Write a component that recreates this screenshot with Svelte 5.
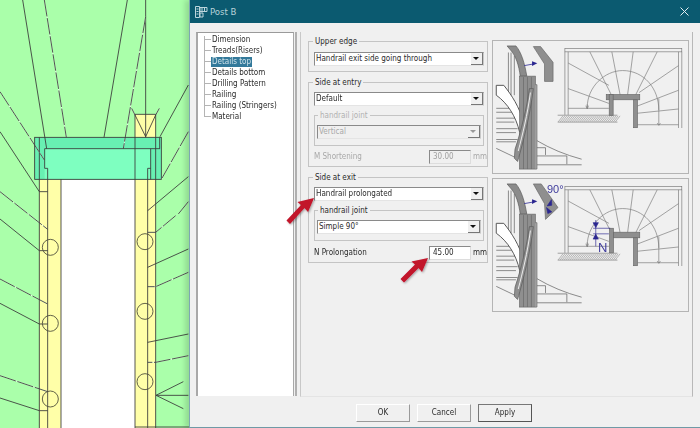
<script>
  const treeItems = ['Dimension','Treads(Risers)','Details top','Details bottom','Drilling Pattern','Railing','Railing (Stringers)','Material'];
  const solid = [
    [[68,0],[140,446]],[[382,0],[312,412]],[[437,0],[437,412]],[[565,255],[480,410]],[[0,395],[118,575],[143,575]],[[565,530],[443,632]],
    [[405,345],[437,410],[467,345]],
    [[0,657],[118,752],[143,752]],[[0,910],[118,972],[143,972]],[[0,1194],[118,1232],[143,1232]],
    [[565,747],[443,802]],[[565,1002],[443,1027]],[[468,1186],[550,1145]],[[468,1186],[565,1186]],[[468,1186],[550,1226]]
  ];
  const dashed = [
    [[133,0],[199,412]],[[437,50],[370,446]],[[0,275],[133,480]],[[565,395],[484,538]],[[0,575],[143,688]],[[565,605],[535,642]],
    [[395,325],[405,345]],[[478,325],[467,345]],
    [[0,837],[143,912]],[[0,1127],[143,1175]],[[527,647],[467,697],[443,697]],[[565,817],[467,860],[443,860]],[[565,1067],[467,1087],[443,1087]]
  ];
  const circles = [[151,742],[151,970],[151,1197],[435,725],[435,934],[435,1145]];
  const pts = (p) => p.map((q) => q.join(',')).join(' ');
  const fan = [
    [[234,82],[358,150]],[[300,48],[365,178]],[[367,48],[392,178]],[[432,48],[415,178]],[[505,48],[440,178]],[[570,90],[450,172]],
    [[570,165],[445,213]],[[570,222],[445,235]],[[234,160],[358,205]],[[234,220],[358,220]],[[510,190],[510,270]],[[445,270],[570,270]]
  ];
  const hatch = Array.from({length: 30}, (_, i) => 204 + i * 6);
</script>

<div class="stage">
  <svg class="cad" viewBox="0 0 567 1284" aria-hidden="true">
    <rect width="567" height="1284" fill="#aaffaa"/>
    <rect x="118" y="537" width="65" height="747" fill="#ffffa8"/>
    <rect x="405" y="343" width="62" height="941" fill="#ffffa8"/>
    <rect x="183" y="538" width="222" height="746" fill="#fff"/>
    <rect x="104" y="412" width="380" height="126" fill="#68f0b2"/>
    <rect x="134" y="446" width="318" height="92" fill="#7effc0"/>
    <g fill="none" stroke="#3a3a3a" stroke-width="2.6">
      {#each solid as l}<polyline points={pts(l)}/>{/each}
      {#each dashed as l}
        <polyline points={pts(l)} stroke="#e8ffe8"/>
        <polyline points={pts(l)} stroke-dasharray="50 5"/>
      {/each}
      <rect x="104" y="412" width="380" height="126"/>
      <polyline points="118,412 118,1284"/><polyline points="143,505 143,1284"/><polyline points="183,538 183,1284"/>
      <polyline points="405,343 405,1284"/><polyline points="467,343 467,1284"/><polyline points="405,343 467,343"/>
      <polyline points="443,505 443,1284"/><polyline points="452,446 452,538"/>
      <polyline points="134,480 134,446 480,446"/><polyline points="134,480 134,505 143,505"/><polyline points="452,505 443,505"/>
      <polyline points="479,412 479,446"/><polyline points="405,1281 567,1281"/>
      {#each circles as c}<circle cx={c[0]} cy={c[1]} r="24" stroke="#4a4a3a"/>{/each}
    </g>
  </svg>

  <section class="dialog">
    <header class="title">
      <svg class="logo" viewBox="0 0 14 14" aria-hidden="true"><path d="M1.500 1.500h4v11h-4zM2.500 4h2M2.500 6.500h2M2.500 9h2M6 2.500h7v4H6zM8 3v3M10.500 3v3M6 8h3v4H6z" fill="none" stroke="#bcd5dc"/></svg>
      <span>Post B</span>
      <svg class="close" viewBox="0 0 9 9" aria-hidden="true"><path d="M.5.5l8 8M8.500.5l-8 8" stroke="#e4eef1"/></svg>
    </header>

    <div class="main">
      <nav class="tree">
        <ul>
          {#each treeItems as item}
            <li class:selected={item === 'Details top'}><span>{item}</span></li>
          {/each}
        </ul>
      </nav>
      <div class="splitter"></div>

      <div class="panel">
        <div class="col">
          <div class="group g1">
            <span class="legend">Upper edge</span>
            <div class="select"><span>Handrail exit side going through</span><i></i></div>
          </div>

          <div class="group g2">
            <span class="legend">Side at entry</span>
            <div class="select"><span>Default</span><i></i></div>
            <div class="group inner">
              <span class="legend off">handrail joint</span>
              <div class="select disabled"><span>Vertical</span><i></i></div>
            </div>
            <div class="field off">
              <span>M Shortening</span>
              <div class="num disabled">30.00</div>
              <span class="unit">mm</span>
            </div>
          </div>

          <div class="group g2">
            <span class="legend">Side at exit</span>
            <div class="select"><span>Handrail prolongated</span><i></i></div>
            <div class="group inner">
              <span class="legend">handrail joint</span>
              <div class="select"><span>Simple 90°</span><i></i></div>
            </div>
            <div class="field last">
              <span>N Prolongation</span>
              <div class="num">45.00</div>
              <span class="unit">mm</span>
            </div>
          </div>
        </div>

        <div class="previews">
          {#each [false, true] as dims}
            <div class="preview">
              <svg viewBox="8 15 588 402" aria-hidden="true">
                <!-- elevation -->
                <g stroke="#555" stroke-width="2" fill="none">
                  <path d="M52 50V180M70 60V180M60 50V180"/>
                  <path d="M15 220H80M15 232H70M15 250H75M15 262H70M15 282H80M15 294H75M15 315H80M15 322H75M15 342L78 372"/>
                  <path d="M138 318Q200 355 275 375M138 340H165V362M138 365H230V390M138 392H275" />
                </g>
                <path d="M48 30H75C92 50 102 85 108 122H88C84 90 75 60 58 42Z" fill="#8b8b8b" stroke="#555" stroke-width="2"/>
                <path d="M15 150H38C62 180 85 215 98 262L86 292C75 245 50 205 15 180Z" fill="#fff" stroke="#555" stroke-width="3"/>
                <rect x="86" y="122" width="48" height="283" fill="#8f8f8f" stroke="#666" stroke-width="2"/>
                <path d="M134 148H139V405H134" fill="#aaa" stroke="#666" stroke-width="2"/>
                <path d="M98 125V405M110 125V405M122 125V405" stroke="#666" stroke-width="2"/>
                <path d="M116 160H128C118 240 98 320 80 382L70 372L72 345C90 290 108 220 116 160Z" fill="#8f8f8f" stroke="#555" stroke-width="2"/>
                <path d="M119 172C110 240 95 300 82 350" stroke="#eee" stroke-width="3" fill="none"/>
                {#if dims}
                  <path d="M128 30L152 30L203 102L165 138L162 90Z" fill="#8f8f8f" stroke="#666" stroke-width="2"/>
                {:else}
                  <path d="M128 32L150 32L188 80V138H162V85Z" fill="#8f8f8f" stroke="#666" stroke-width="2"/>
                {/if}
                <path d="M100 90L128 85" stroke="#34319a" stroke-width="2.5"/>
                <path d="M140 83L124 77V91Z" fill="#2a2690"/>

                <!-- plan -->
                <g stroke="#777" stroke-width="2" fill="none">
                  <rect x="224" y="38" width="356" height="10"/>
                  <path d="M224 48V240M234 48V240M570 48V280M580 48V280"/>
                  {#each fan as l}<polyline points={pts(l)}/>{/each}
                  <path d="M292 218C292 155 345 105 400 105C465 105 510 160 510 225"/>
                  <path d="M292 208V220M288 212L292 222L296 212"/>
                  <path d="M505 265L510 272L515 265"/>
                </g>
                {#if dims}
                  <rect x="372" y="177" width="80" height="17" fill="#8f8f8f" stroke="#666" stroke-width="2"/>
                  <rect x="360" y="165" width="12" height="75" fill="#8f8f8f" stroke="#666" stroke-width="2"/>
                {:else}
                  <rect x="350" y="178" width="102" height="16" fill="#8f8f8f" stroke="#666" stroke-width="2"/>
                  <rect x="359" y="178" width="12" height="64" fill="#8f8f8f" stroke="#666" stroke-width="2"/>
                {/if}
                <rect x="433" y="194" width="12" height="85" fill="#8f8f8f" stroke="#666" stroke-width="2"/>
                <g stroke="#777" stroke-width="1.5">
                  <path d="M202 241H384M202 262H384" stroke-width="2"/>
                  {#each hatch as x}<path d="M{x} 261L{x + 14} 243"/>{/each}
                </g>
                {#if dims}
                  <g fill="#2a2690" stroke="#2a2690" stroke-width="2">
                    <path d="M310 165H362M310 182H358M318 140V220" fill="none"/>
                    <path d="M310 148H326L318 163Z"/><path d="M310 198H326L318 183Z"/>
                    <path d="M183 78L170 97L184 95Z"/><path d="M172 120L168 102L184 115Z"/>
                  </g>
                {/if}
              </svg>
              {#if dims}
                <span class="dim deg">90°</span>
                <span class="dim n">N</span>
              {/if}
            </div>
          {/each}
        </div>
      </div>
    </div>

    <footer class="footer">
      <button>OK</button>
      <button>Cancel</button>
      <button class="default">Apply</button>
    </footer>
  </section>

  <svg class="arrows" viewBox="0 0 700 428" aria-hidden="true">
    <defs>
      <filter id="sh" x="-30%" y="-30%" width="160%" height="160%"><feDropShadow dx="1" dy="1" stdDeviation="1" flood-color="#000" flood-opacity=".35"/></filter>
    </defs>
    <g fill="#c2132a" filter="url(#sh)">
      <path d="M314 198L308 212L304.500 208L290 224L286.500 220.500L301 205L297.500 202Z"/>
      <path d="M428 258L422 272L418.500 268L404 282.500L400.500 279L415 264.500L411.500 261.500Z"/>
    </g>
  </svg>
</div>

<style>
  :global(body) { margin: 0; }
  .stage {
    position: relative;
    display: flex;
    width: 700px;
    height: 428px;
    overflow: hidden;
    font: 8px/10px "DejaVu Sans Condensed", "DejaVu Sans", sans-serif;
    font-stretch: condensed;
    color: #2a2a2a;
    filter: blur(0.4px);
  }
  .cad { width: 189px; height: 428px; flex: none; display: block; }
  .dialog {
    flex: 1;
    display: flex;
    flex-direction: column;
    background: #f0f0f0;
    border-bottom: 1px solid #6f9aa6;
    border-left: 1px solid #7ea7b2;
    box-shadow: -4px 0 5px rgba(0, 0, 0, .14);
    box-sizing: border-box;
    min-width: 0;
  }
  .title {
    height: 23px;
    flex: none;
    display: flex;
    align-items: center;
    gap: 2px;
    padding: 0 10px 0 4px;
    background: #0b5a70;
    color: #b8d2d9;
    font-size: 9.5px;
  }
  .logo { width: 14px; height: 14px; }
  .close { width: 9px; height: 9px; margin-left: auto; margin-right: 1px; }
  .main { flex: 1; display: flex; padding: 9px 7px 0 6px; min-height: 0; }
  .tree {
    width: 98px;
    height: 364px;
    box-sizing: border-box;
    background: #fff;
    border-top: 1px solid #9a9a9a;
    border-left: 2px solid #a8a8a8;
    border-right: 1px solid #a8a8a8;
    flex: none;
  }
  .tree ul {
    list-style: none;
    margin: 0;
    padding: 1px 0 0 13px;
    position: relative;
  }
  .tree ul::before {
    content: "";
    position: absolute;
    left: 6px;
    top: 3px;
    height: 81px;
    border-left: 1px solid #b4b4b4;
  }
  .tree li { height: 11px; line-height: 11px; position: relative; white-space: nowrap; }
  .tree li::before {
    content: "";
    position: absolute;
    left: -7px;
    top: 5px;
    width: 7px;
    border-top: 1px solid #b4b4b4;
  }
  .tree li span { padding: 0 1px; display: inline-block; height: 10px; line-height: 10px; }
  .tree li.selected span { background: #33799a; color: #cfe2ea; }
  .splitter {
    width: 2px;
    height: 364px;
    margin: 0 3px 0 1px;
    background: #b0b0b0;
    flex: none;
  }
  .panel {
    flex: 1;
    display: flex;
    gap: 4px;
    padding: 9px 3px 0 7px;
    border-left: 1px solid #c8c8c8;
    border-right: 1px solid #b8b8b8;
    border-bottom: 1px solid #e4e4e4;
    min-width: 0;
  }
  .col { width: 180px; flex: none; display: flex; flex-direction: column; gap: 10px; }
  .group {
    position: relative;
    border: 1px solid #c4c4c4;
    padding: 9px 3px 2px 5px;
  }
  .g1 { height: 31px; box-sizing: border-box; padding-top: 10px; }
  .legend {
    position: absolute;
    top: -5px;
    left: 4px;
    padding: 0 2px;
    background: #f0f0f0;
    color: #2a2a2a;
    white-space: nowrap;
  }
  .legend.off { color: #b0b0b0; }
  .inner { margin: 9px 0 0; padding: 9px 2px 6px 2px; }
  .inner .legend { left: 3px; }
  .select {
    height: 14px;
    box-sizing: border-box;
    display: flex;
    align-items: center;
    justify-content: space-between;
    background: #fff;
    border: 1px solid #8a8a8a;
    border-right-color: #c8c8c8;
    border-bottom-color: #e4e4e4;
    padding-left: 1px;
  }
  .select i {
    position: relative;
    width: 12px;
    height: 12px;
    flex: none;
    background: #f0f0f0;
    border-right: 1px solid #777;
    border-bottom: 1px solid #777;
    box-sizing: border-box;
  }
  .select i::after {
    content: "";
    position: absolute;
    left: 2px;
    top: 4px;
    border: 3px solid transparent;
    border-top: 3px solid #111;
    border-bottom: 0;
  }
  .select.disabled { background: #f0f0f0; color: #a8a8a8; }
  .select.disabled i::after { border-top-color: #999; }
  .field { display: flex; align-items: center; margin-top: 4px; height: 14px; }
  .field.last { margin-top: 5px; }
  .field > span:first-child { flex: 1; }
  .field.off { color: #a8a8a8; }
  .num {
    width: 42px;
    height: 14px;
    box-sizing: border-box;
    background: #fff;
    border: 1px solid #8a8a8a;
    border-right-color: #ddd;
    border-bottom-color: #ddd;
    padding-left: 3px;
    line-height: 12px;
  }
  .num.disabled { background: #f0f0f0; color: #a0a0a0; }
  .unit { width: 15px; margin-left: 2px; margin-right: -4px; flex: none; }
  .previews { width: 197px; flex: none; display: flex; flex-direction: column; gap: 4px; margin-top: -1px; }
  .preview {
    position: relative;
    height: 134px;
    box-sizing: border-box;
    border: 1px solid #b4b4b4;
  }
  .preview svg { display: block; width: 100%; height: 100%; }
  .dim { position: absolute; color: #3f3c9c; font-family: "Liberation Sans", sans-serif; }
  .deg { left: 54px; top: 5px; font-size: 11px; }
  .n { left: 105px; top: 64px; font-size: 13px; }
  .footer { height: 30px; flex: none; display: flex; gap: 7px; padding: 7px 0 0 166px; box-sizing: border-box; }
  button {
    width: 54px;
    height: 18px;
    padding: 0;
    font: inherit;
    color: #2a2a2a;
    background: #f0f0f0;
    border: 1px solid #fff;
    border-right-color: #9a9a9a;
    border-bottom-color: #9a9a9a;
  }
  button.default { border-color: #777; border-right-color: #555; border-bottom-color: #555; }
  .arrows { position: absolute; inset: 0; width: 700px; height: 428px; pointer-events: none; }
</style>
